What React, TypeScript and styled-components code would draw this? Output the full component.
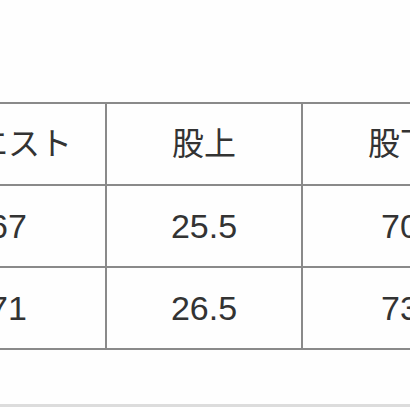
import styled, { createGlobalStyle } from "styled-components";

const GlobalStyle = createGlobalStyle`
  html, body {
    margin: 0;
    padding: 0;
    background: #fefefe;
  }
  body {
    font-family: "Liberation Sans", "Noto Sans CJK JP", sans-serif;
    color: #333333;
  }
`;

const header = ["ウエスト", "股上", "股下"];
const rows = [
  ["67", "25.5", "70"],
  ["71", "26.5", "73"],
];

export default function App() {
  return (
    <>
      <GlobalStyle />
      <Page>
        <SizeTable>
          <tbody>
            <Row>
              {header.map((h) => (
                <Cell key={h} $head>
                  {h}
                </Cell>
              ))}
            </Row>
            {rows.map((r, i) => (
              <Row key={i}>
                {r.map((v, j) => (
                  <Cell key={j}>{v}</Cell>
                ))}
              </Row>
            ))}
          </tbody>
        </SizeTable>
        <Divider />
      </Page>
    </>
  );
}

const Page = styled.div`
  width: 410px;
  height: 410px;
  overflow: hidden;
  padding-top: 102px;
  box-sizing: border-box;
`;

// the table is wider than the viewport; the first column is cut off on the left
const SizeTable = styled.table`
  border-collapse: collapse;
  margin-left: -91px;
  table-layout: fixed;
  width: 584px;
  min-width: 584px;
`;

const Row = styled.tr`
  height: 82px;
`;

const Cell = styled.td<{ $head?: boolean }>`
  width: 194px;
  padding: 0;
  border: 2px solid #8a8a8a;
  text-align: center;
  vertical-align: middle;
  font-size: ${({ $head }) => ($head ? "32px" : "34px")};
  line-height: 1;
  white-space: nowrap;
`;

const Divider = styled.div`
  margin-top: 54px;
  height: 3px;
  background: #dcdcdc;
`;
